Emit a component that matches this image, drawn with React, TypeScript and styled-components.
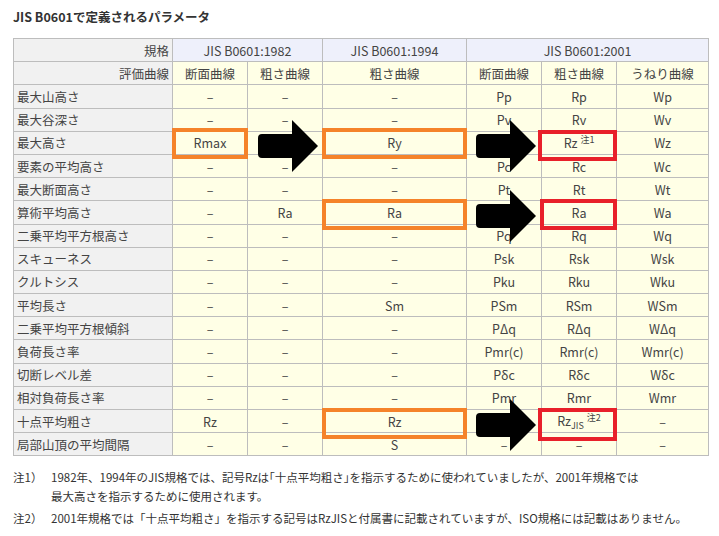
import React from "react";
import styled, { createGlobalStyle } from "styled-components";

const Global = createGlobalStyle`
  body { margin: 0; background: #fff; font-family: "Noto Sans CJK JP", "Noto Sans", sans-serif; color: #333; }
`;

const Page = styled.div`
  padding: 7px 11px 0 13px;
  width: 719px;
  box-sizing: border-box;
`;

const Title = styled.h3`
  margin: 0 0 12px 0;
  font-size: 12.5px;
  font-weight: bold;
  color: #333;
`;

const Wrap = styled.div`
  position: relative;
  width: 695px;
`;

const Table = styled.table`
  border-collapse: collapse;
  width: 695px;
  table-layout: fixed;
  font-size: 12.5px;
  color: #444;
`;

const Cell = styled.td<{ $kind?: "label" | "year" | "data"; $right?: boolean }>`
  border: 1px solid #bdbdbd;
  height: 22.2px;
  padding: 0 3px;
  text-align: ${(p) => (p.$right ? "right" : p.$kind === "label" ? "left" : "center")};
  background: ${(p) =>
    p.$kind === "label" ? "#f1f1f1" : p.$kind === "year" ? "#eef0fb" : "#ffffe6"};
  white-space: nowrap;
`;

const Sup = styled.sup`
  font-size: 9px;
  margin-left: 3px;
  vertical-align: 5px;
`;

const Sub = styled.sub`
  font-size: 9px;
  vertical-align: -3px;
`;

const Box = styled.div<{ $color: string }>`
  position: absolute;
  border: 4px solid ${(p) => p.$color};
  box-sizing: border-box;
  pointer-events: none;
`;

const ArrowSvg = styled.svg`
  position: absolute;
  width: 62px;
  height: 52px;
`;

const Notes = styled.div`
  margin-top: 12px;
  font-size: 11.5px;
  color: #333;
  line-height: 19px;
  display: flex;
  flex-direction: column;
  gap: 3px;
`;

const Note = styled.div`
  display: grid;
  grid-template-columns: 38px 1fr;
`;

const D = "–";

const rows: [string, string, string, string, React.ReactNode, React.ReactNode, React.ReactNode][] = [
  ["最大山高さ", D, D, D, "Pp", "Rp", "Wp"],
  ["最大谷深さ", D, D, D, "Pv", "Rv", "Wv"],
  ["最大高さ", "Rmax", D, "Ry", "Pz", <>Rz<Sup>注1</Sup></>, "Wz"],
  ["要素の平均高さ", D, D, D, "Pc", "Rc", "Wc"],
  ["最大断面高さ", D, D, D, "Pt", "Rt", "Wt"],
  ["算術平均高さ", D, "Ra", "Ra", "Pa", "Ra", "Wa"],
  ["二乗平均平方根高さ", D, D, D, "Pq", "Rq", "Wq"],
  ["スキューネス", D, D, D, "Psk", "Rsk", "Wsk"],
  ["クルトシス", D, D, D, "Pku", "Rku", "Wku"],
  ["平均長さ", D, D, "Sm", "PSm", "RSm", "WSm"],
  ["二乗平均平方根傾斜", D, D, D, "PΔq", "RΔq", "WΔq"],
  ["負荷長さ率", D, D, D, "Pmr(c)", "Rmr(c)", "Wmr(c)"],
  ["切断レベル差", D, D, D, "Pδc", "Rδc", "Wδc"],
  ["相対負荷長さ率", D, D, D, "Pmr", "Rmr", "Wmr"],
  ["十点平均粗さ", "Rz", D, "Rz", D, <>Rz<Sub>JIS</Sub><Sup>注2</Sup></>, D],
  ["局部山頂の平均間隔", D, D, "S", D, D, D],
];

const Arrow = ({ x, y }: { x: number; y: number }) => (
  <ArrowSvg viewBox="0 0 62 52" style={{ left: x, top: y }}>
    <path d="M4 14 H34 V0 L60 26 L34 52 V38 H4 Q0 38 0 34 V18 Q0 14 4 14 Z" fill="#000" />
  </ArrowSvg>
);

export default function App() {
  return (
    <Page>
      <Global />
      <Title>JIS B0601で定義されるパラメータ</Title>
      <Wrap>
        <Table>
          <colgroup>
            <col style={{ width: 159 }} />
            <col style={{ width: 75 }} />
            <col style={{ width: 75 }} />
            <col style={{ width: 144 }} />
            <col style={{ width: 75 }} />
            <col style={{ width: 75 }} />
            <col style={{ width: 92 }} />
          </colgroup>
          <tbody>
            <tr>
              <Cell $kind="label" $right>規格</Cell>
              <Cell $kind="year" colSpan={2}>JIS B0601:1982</Cell>
              <Cell $kind="year">JIS B0601:1994</Cell>
              <Cell $kind="year" colSpan={3}>JIS B0601:2001</Cell>
            </tr>
            <tr>
              <Cell $kind="label" $right>評価曲線</Cell>
              <Cell>断面曲線</Cell>
              <Cell>粗さ曲線</Cell>
              <Cell>粗さ曲線</Cell>
              <Cell>断面曲線</Cell>
              <Cell>粗さ曲線</Cell>
              <Cell>うねり曲線</Cell>
            </tr>
            {rows.map((r) => (
              <tr key={r[0]}>
                <Cell $kind="label">{r[0]}</Cell>
                {r.slice(1).map((v, i) => (
                  <Cell key={i}>{v}</Cell>
                ))}
              </tr>
            ))}
          </tbody>
        </Table>
        <Box $color="#f5832a" style={{ left: 159, top: 90, width: 76, height: 31 }} />
        <Box $color="#f5832a" style={{ left: 309, top: 90, width: 145, height: 31 }} />
        <Box $color="#f5832a" style={{ left: 309, top: 161, width: 145, height: 31 }} />
        <Box $color="#f5832a" style={{ left: 309, top: 370, width: 145, height: 31 }} />
        <Box $color="#e8202a" style={{ left: 525, top: 92, width: 79, height: 31 }} />
        <Box $color="#e8202a" style={{ left: 527, top: 161, width: 77, height: 31 }} />
        <Box $color="#e8202a" style={{ left: 525, top: 370, width: 79, height: 33 }} />
        <Arrow x={245} y={82} />
        <Arrow x={463} y={82} />
        <Arrow x={463} y={152} />
        <Arrow x={463} y={361} />
      </Wrap>
      <Notes>
        <Note>
          <span>注1）</span>
          <span>1982年、1994年のJIS規格では、記号Rzは｢十点平均粗さ｣を指示するために使われていましたが、2001年規格では<br />最大高さを指示するために使用されます。</span>
        </Note>
        <Note>
          <span>注2）</span>
          <span>2001年規格では「十点平均粗さ」を指示する記号はRzJISと付属書に記載されていますが、ISO規格には記載はありません。</span>
        </Note>
      </Notes>
    </Page>
  );
}
